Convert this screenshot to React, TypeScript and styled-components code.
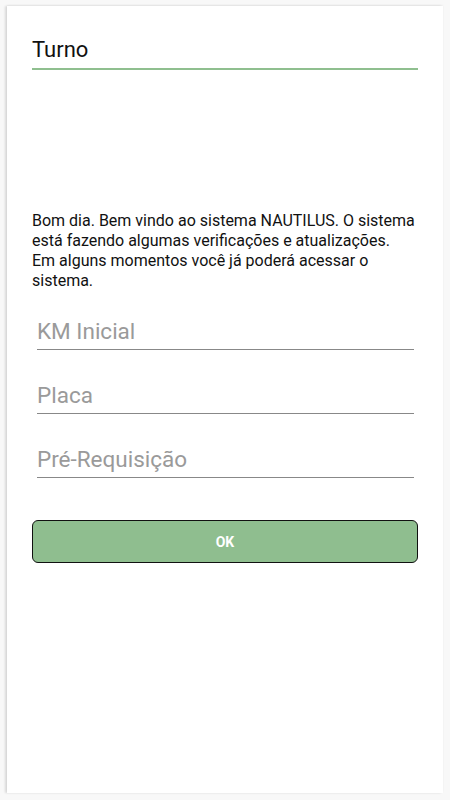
import React from 'react';
import styled, { createGlobalStyle } from 'styled-components';

const GlobalStyle = createGlobalStyle`
    html, body {
        margin: 0;
        padding: 0;
        background: #f8f8f8;
        font-family: Roboto, "Liberation Sans", sans-serif;
    }
`;

const Page = styled.div`
    padding: 6px 7px 7px 7px;
    box-sizing: border-box;
    height: 800px;
    display: flex;
`;

const Card = styled.div`
    flex: 1;
    background: #ffffff;
    box-shadow: -2px 0 2px rgba(0, 0, 0, 0.12), 0 -1px 2px rgba(0, 0, 0, 0.05);
    padding: 31px 25px 0 25px;
    display: flex;
    flex-direction: column;
`;

const Title = styled.div`
    font-size: 22px;
    line-height: 26px;
    color: #111;
    padding-bottom: 5px;
    border-bottom: 2px solid #8fbf8f;
`;

const Message = styled.p`
    margin: 141px 0 0 0;
    font-size: 16px;
    line-height: 20px;
    color: #111;
`;

const Fields = styled.div`
    display: flex;
    flex-direction: column;
    gap: 14.5px;
    margin: 9px 4px 0 5px;
`;

const Input = styled.input`
    border: none;
    border-bottom: 1.5px solid #888;
    outline: none;
    font-family: Roboto, "Liberation Sans", sans-serif;
    font-size: 22.5px;
    padding: 17px 0 3px 0;
    height: 49.5px;
    box-sizing: border-box;
    background: transparent;
    color: #333;
    &::placeholder {
        color: #9a9a9a;
    }
`;

const OkButton = styled.button`
    margin-top: 42.5px;
    height: 43px;
    border: 1.5px solid #111;
    border-radius: 6px;
    background: #8fbe8f;
    color: #fff;
    font-family: Roboto, "Liberation Sans", sans-serif;
    font-weight: bold;
    font-size: 14px;
`;

const App = () => {
    return (
        <>
            <GlobalStyle />
            <Page>
                <Card>
                    <Title>Turno</Title>
                    <Message>
                        Bom dia. Bem vindo ao sistema NAUTILUS. O sistema
                        <br />
                        está fazendo algumas verificações e atualizações.
                        <br />
                        Em alguns momentos você já poderá acessar o
                        <br />
                        sistema.
                    </Message>
                    <Fields>
                        <Input placeholder="KM Inicial" />
                        <Input placeholder="Placa" />
                        <Input placeholder="Pré-Requisição" />
                    </Fields>
                    <OkButton>OK</OkButton>
                </Card>
            </Page>
        </>
    );
};

export default App;
